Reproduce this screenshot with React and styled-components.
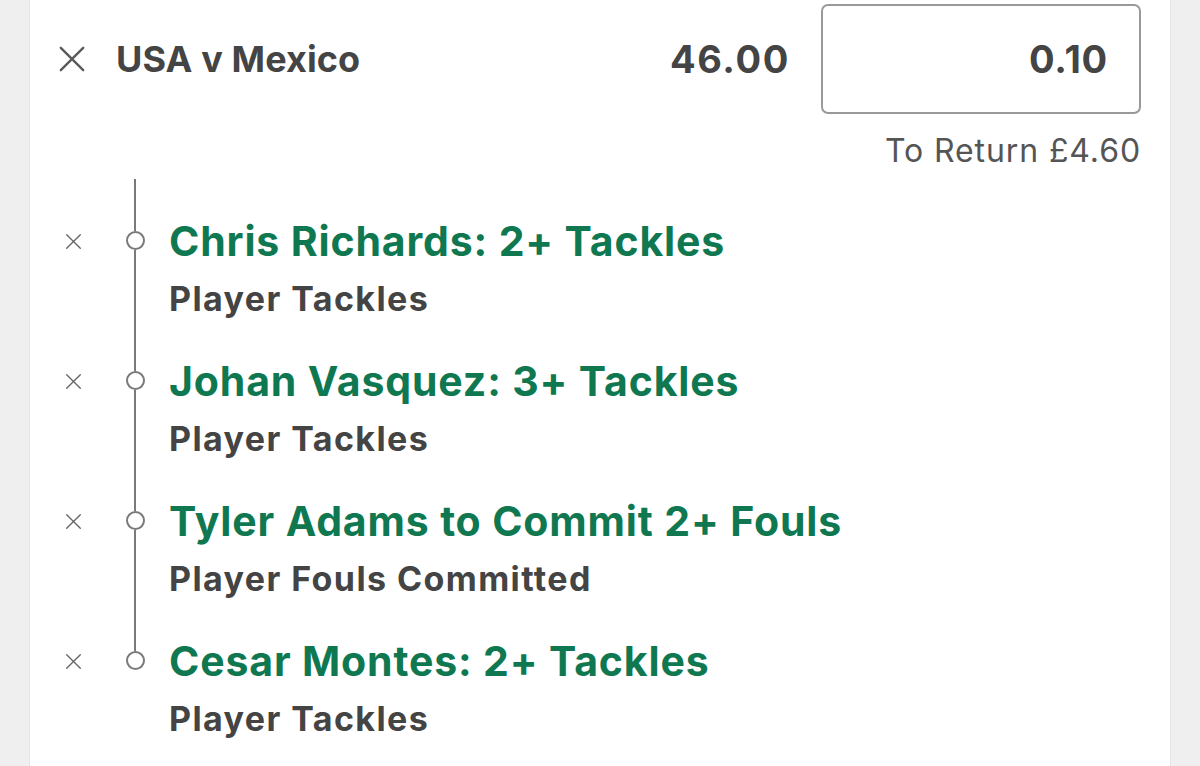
import React from 'react';
import styled, { createGlobalStyle } from 'styled-components';

const GlobalStyle = createGlobalStyle`
  html, body {
    margin: 0;
    padding: 0;
    background: #efefef;
    font-family: Inter, "Noto Sans", "Liberation Sans", sans-serif;
    -webkit-font-smoothing: antialiased;
  }
`;

const legs = [
  { title: 'Chris Richards: 2+ Tackles', market: 'Player Tackles' },
  { title: 'Johan Vasquez: 3+ Tackles', market: 'Player Tackles' },
  { title: 'Tyler Adams to Commit 2+ Fouls', market: 'Player Fouls Committed' },
  { title: 'Cesar Montes: 2+ Tackles', market: 'Player Tackles' },
];

function CrossIcon({ size, stroke }) {
  return (
    <svg width={size} height={size} viewBox="0 0 20 20" fill="none">
      <path
        d="M2 2 L18 18 M18 2 L2 18"
        stroke="currentColor"
        strokeWidth={stroke}
        strokeLinecap="round"
      />
    </svg>
  );
}

export default function App() {
  return (
    <>
      <GlobalStyle />
      <Card>
        <Header>
          <HeaderClose>
            <CrossIcon size={28} stroke={1.7} />
          </HeaderClose>
          <EventName>USA v Mexico</EventName>
          <Odds>46.00</Odds>
          <StakeBox>0.10</StakeBox>
        </Header>
        <ReturnLine>To Return £4.60</ReturnLine>
        <Legs>
          {legs.map((leg, i) => (
            <LegRow key={leg.title}>
              <LegRemove>
                <CrossIcon size={17} stroke={1.6} />
              </LegRemove>
              <Rail>
                <RailSegment />
                <RailDot />
                <RailSegment grow hidden={i === legs.length - 1} />
              </Rail>
              <LegText>
                <LegTitle>{leg.title}</LegTitle>
                <LegMarket>{leg.market}</LegMarket>
              </LegText>
            </LegRow>
          ))}
        </Legs>
      </Card>
    </>
  );
}

const Card = styled.div`
  margin: 0 30px;
  min-height: 766px;
  box-sizing: border-box;
  background: #fff;
  box-shadow: 0 0 0 1px #e6e6e6;
  padding: 4px 29px 0 28px;
`;

const Header = styled.div`
  display: flex;
  align-items: center;
  height: 110px;
`;

const HeaderClose = styled.div`
  width: 28px;
  height: 28px;
  color: #5a5a5a;
  display: flex;
  margin-right: 30px;
`;

const EventName = styled.div`
  flex: 1;
  font-size: 36px;
  font-weight: 700;
  color: #444;
  letter-spacing: 0.1px;
`;

const Odds = styled.div`
  font-size: 38px;
  font-weight: 700;
  color: #444;
  letter-spacing: 1.6px;
  margin-right: 31px;
`;

const StakeBox = styled.div`
  width: 320px;
  height: 110px;
  box-sizing: border-box;
  border: 2px solid #999;
  border-radius: 7px;
  display: flex;
  align-items: center;
  justify-content: flex-end;
  padding-right: 31px;
  font-size: 38px;
  font-weight: 700;
  color: #444;
  letter-spacing: 0.8px;
`;

const ReturnLine = styled.div`
  text-align: right;
  margin-top: 17px;
  line-height: 40px;
  font-size: 32px;
  font-weight: 400;
  color: #555;
  letter-spacing: 0.9px;
`;

const Legs = styled.div`
  margin-top: 8px;
  display: flex;
  flex-direction: column;
`;

const LegRow = styled.div`
  display: grid;
  grid-template-columns: 28px 20px 1fr;
  height: 140px;
`;

const LegRemove = styled.div`
  height: 56px;
  margin-top: 34px;
  display: flex;
  align-items: center;
  justify-content: center;
  color: #666;
  margin-left: 2px;
`;

const Rail = styled.div`
  margin-left: 39px;
  display: flex;
  flex-direction: column;
  align-items: center;
  width: 20px;
`;

const RailSegment = styled.div`
  width: 2px;
  background: ${({ hidden }) => (hidden ? 'transparent' : '#7a7a7a')};
  height: ${({ grow }) => (grow ? 'auto' : '52px')};
  flex: ${({ grow }) => (grow ? 1 : 'none')};
`;

const RailDot = styled.div`
  width: 19px;
  height: 19px;
  box-sizing: border-box;
  border: 2px solid #7a7a7a;
  border-radius: 50%;
  background: #fff;
  flex: none;
`;

const LegText = styled.div`
  margin-left: 63px;
  padding-top: 34px;
  display: flex;
  flex-direction: column;
  gap: 10px;
`;

const LegTitle = styled.div`
  font-size: 41px;
  line-height: 56px;
  font-weight: 700;
  color: #0f7850;
  letter-spacing: 0.85px;
  white-space: nowrap;
`;

const LegMarket = styled.div`
  font-size: 34px;
  line-height: 40px;
  font-weight: 700;
  color: #444;
  letter-spacing: 1.4px;
  white-space: nowrap;
`;
